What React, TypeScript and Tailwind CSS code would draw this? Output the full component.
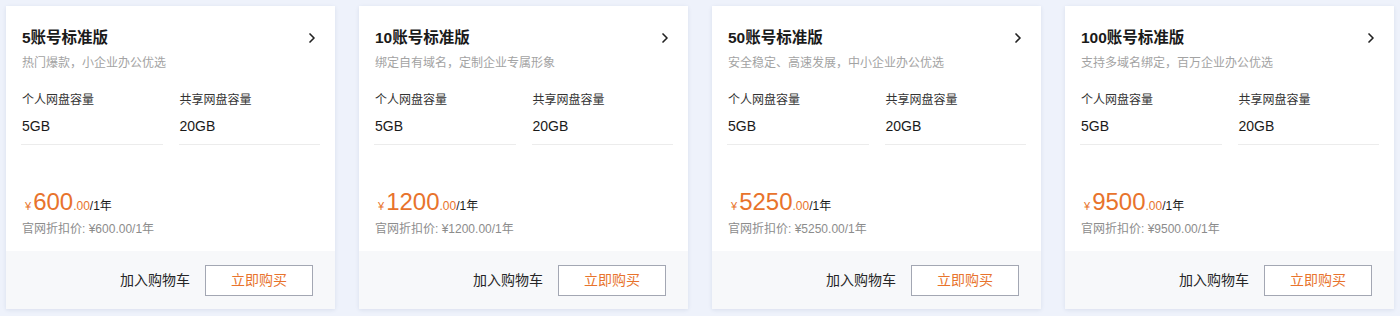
import { ChevronRight } from 'lucide-react';

type Plan = {
	title: string;
	desc: string;
	price: string;
};

const plans: Plan[] = [
	{ title: '5账号标准版', desc: '热门爆款，小企业办公优选', price: '600' },
	{ title: '10账号标准版', desc: '绑定自有域名，定制企业专属形象', price: '1200' },
	{ title: '50账号标准版', desc: '安全稳定、高速发展，中小企业办公优选', price: '5250' },
	{ title: '100账号标准版', desc: '支持多域名绑定，百万企业办公优选', price: '9500' },
];

function PlanCard({ plan }: { plan: Plan }) {
	return (
		<div className="flex flex-col w-[329px] h-[303px] bg-white shadow-[0_1px_4px_rgba(40,60,120,0.10)]">
			<div className="flex-1 pl-4 pr-[15px] pt-[22px]">
				<div className="flex items-center justify-between h-5">
					<h3 className="text-[15.5px] font-semibold text-[#1a1a1a]">{plan.title}</h3>
					<ChevronRight className="w-4 h-4 text-[#222]" strokeWidth={2.5} />
				</div>
				<p className="mt-[5px] text-[12px] leading-5 text-[#a3a3a3]">{plan.desc}</p>
				<div className="grid grid-cols-2 gap-4 mt-[17px] -ml-[1px]">
					{[
						['个人网盘容量', '5GB'],
						['共享网盘容量', '20GB'],
					].map(([label, value]) => (
						<div key={label} className="border-b border-[#ececec] pb-[8px] pl-[1px]">
							<div className="text-[12px] leading-5 text-[#333]">{label}</div>
							<div className="mt-[6px] text-[14px] leading-5 text-[#1a1a1a]">{value}</div>
						</div>
					))}
				</div>
				<div className="flex items-baseline mt-[43px] text-[#e8732c]">
					<span className="text-[11px] ml-[3px] mr-[2px]">¥</span>
					<span className="text-[24px] leading-7">{plan.price}</span>
					<span className="text-[12px]">.00</span>
					<span className="text-[12px] text-[#1a1a1a]">/1年</span>
				</div>
				<p className="mt-[3px] text-[12px] leading-5 text-[#8c8c8c]">官网折扣价: ¥{plan.price}.00/1年</p>
			</div>
			<div className="flex items-center justify-end gap-[15px] h-[58px] bg-[#f7f8fa] pr-[22px]">
				<span className="text-[14px] text-[#262626]">加入购物车</span>
				<button className="w-[108px] h-[31px] border border-[#a3a7b3] bg-white text-[14px] text-[#e8732c]">
					立即购买
				</button>
			</div>
		</div>
	);
}

export default function App() {
	return (
		<div
			className="w-[1400px] h-[316px] bg-[#eef2fb] pt-[6px] pl-[6px] flex gap-6"
			style={{ fontFamily: '"Liberation Sans", "Noto Sans CJK SC", sans-serif' }}
		>
			{plans.map((plan) => (
				<PlanCard key={plan.title} plan={plan} />
			))}
		</div>
	);
}
